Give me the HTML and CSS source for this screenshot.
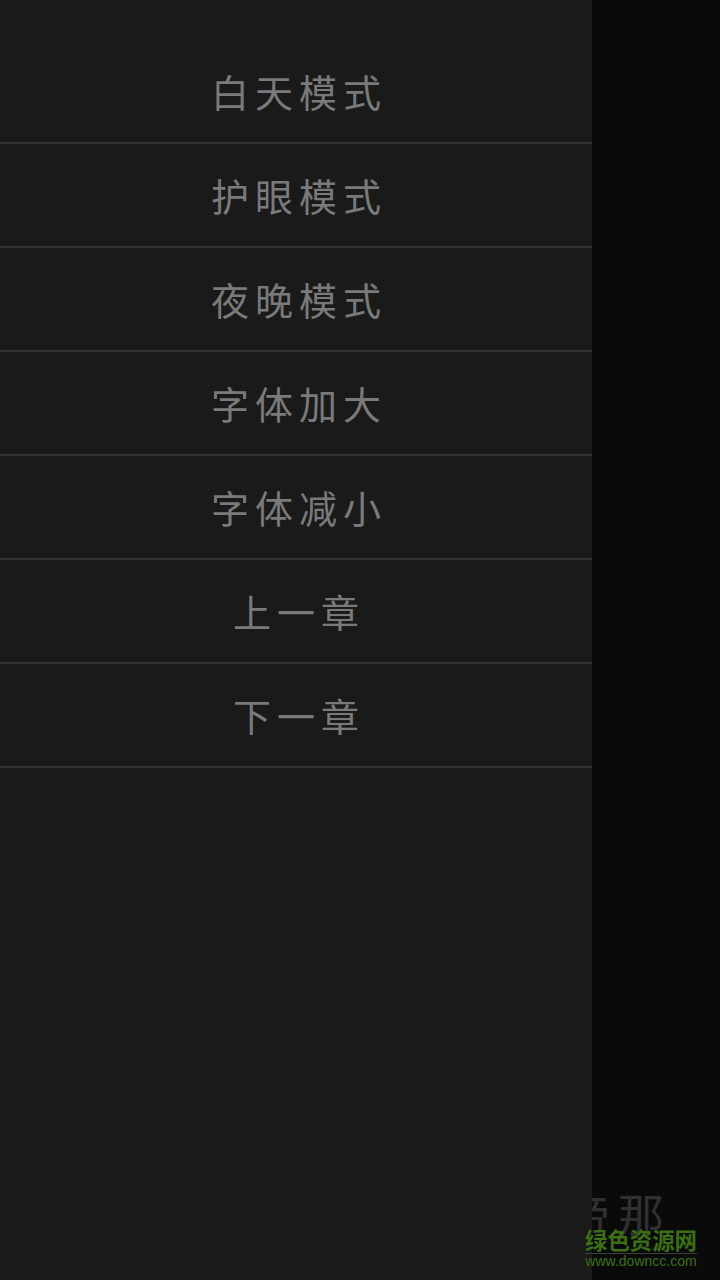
FILE: index.html
```html
<!DOCTYPE html>
<html lang="zh">
<head>
<meta charset="utf-8">
<title>阅读菜单</title>
<link rel="stylesheet" href="styles.css">
</head>
<body>
<div class="screen">
  <div class="behind">帝那</div>
  <nav class="drawer">
    <div class="item">白天模式</div>
    <div class="item">护眼模式</div>
    <div class="item">夜晚模式</div>
    <div class="item">字体加大</div>
    <div class="item">字体减小</div>
    <div class="item">上一章</div>
    <div class="item">下一章</div>
  </nav>
  <div class="mark">
    <div class="mark-name">绿色资源网</div>
    <div class="mark-url">www.downcc.com</div>
  </div>
</div>
</body>
</html>
```
FILE: styles.css
```css
html, body {
  margin: 0;
  padding: 0;
  background: #0a0a0a;
}
.screen {
  position: relative;
  width: 720px;
  height: 1280px;
  overflow: hidden;
  background: #0a0a0a;
  font-family: "Noto Sans CJK SC", "Noto Sans", sans-serif;
}
.drawer {
  position: relative;
  box-sizing: border-box;
  width: 592px;
  height: 1280px;
  padding-top: 40px;
  background: #1a1a1a;
}
.item {
  box-sizing: border-box;
  height: 104px;
  display: flex;
  align-items: center;
  justify-content: center;
  border-bottom: 2px solid #333333;
  color: #7a7a7a;
  font-size: 38px;
  line-height: 1;
  letter-spacing: 6px;
  padding-left: 6px;
}
.behind {
  position: absolute;
  left: 564px;
  top: 1187px;
  color: #303030;
  font-size: 46px;
  line-height: 50px;
  letter-spacing: 8px;
  white-space: nowrap;
}
.mark {
  position: absolute;
  left: 585px;
  top: 1225px;
  width: 112px;
  text-align: center;
}
.mark-name {
  color: #3a6f14;
  font-size: 22.4px;
  font-weight: 700;
  line-height: 28px;
  white-space: nowrap;
  border-bottom: 1px solid #3a3f38;
}
.mark-url {
  color: #3c6e1c;
  font-family: "Liberation Sans", sans-serif;
  font-size: 14px;
  line-height: 15px;
  white-space: nowrap;
}
```
